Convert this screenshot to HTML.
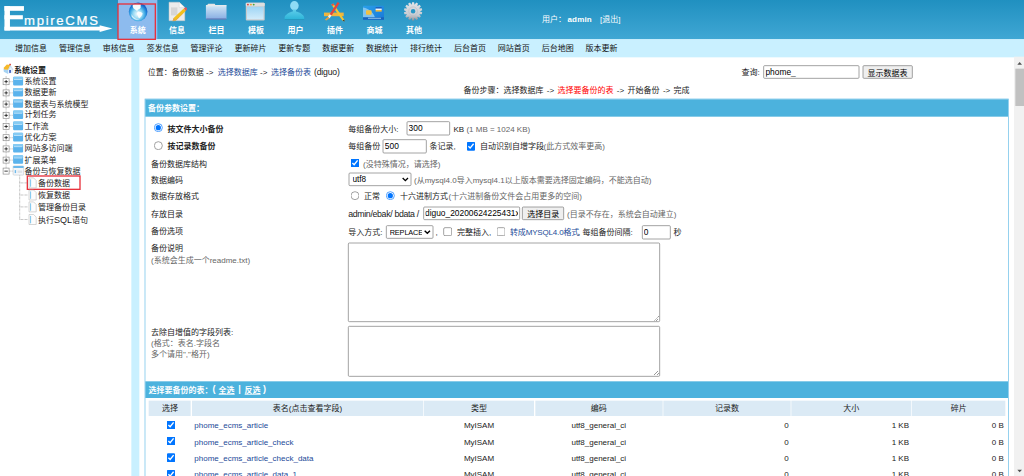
<!DOCTYPE html>
<html lang="zh-CN"><head><meta charset="utf-8"><title>EmpireCMS</title>
<style>
html,body{margin:0;padding:0;width:1024px;height:476px;overflow:hidden;background:#fff}
#s{position:absolute;left:0;top:0;width:1536px;height:714px;transform:scale(.66666667);transform-origin:0 0;font:12px "Liberation Sans","Noto Sans CJK SC",sans-serif;color:#222;overflow:hidden;background:#fff}
#s *{box-sizing:border-box}
.t{position:absolute;white-space:nowrap;line-height:16px;height:16px;font-size:12px}
.b{position:absolute}
.c{text-align:center}
.u{display:inline-block;height:15px;border-bottom:1px solid currentColor}
.w{color:#fff}
.bd{font-weight:bold}
.g{color:#666}
.a{color:#1b4a98}
.r{color:#f00}
input,select,textarea,button{position:absolute;margin:0;font:13.33px "Liberation Sans","Noto Sans CJK SC",sans-serif;color:#000}
input[type=text]{border:1px solid #767676;border-radius:2px;padding:1px 2px;background:#fff;font-size:12.6px}
textarea{border:1px solid #767676;border-radius:2px;padding:2px;background:#fff;resize:both}
button{white-space:nowrap;padding:0;font-size:12px;border:1px solid #767676;border-radius:2px;background:#efefef}
select{font-size:12.3px;padding:0 0 0 1px;border:1px solid #767676;border-radius:2px;background-color:#fff}
</style></head>
<body><div id="s">
<div class="b " style="left:0px;top:0px;width:1536px;height:58.99px;background:linear-gradient(#2090c0,#40a7d4)"></div>
<div class="b " style="left:177.15px;top:0px;width:58.65px;height:58.99px;background:#8dbbee"></div>
<div class="b " style="left:0px;top:58.99px;width:1536px;height:27px;background:#c9f0ff"></div>
<svg class="b" style="left:0;top:0" width="180" height="58" viewBox="0 0 120 38.667"><g fill="#fff"><rect x="4.45" y="6.1" width="5.5" height="24.4"/><rect x="4.45" y="6.1" width="19.5" height="4.7"/><rect x="4.45" y="15.2" width="18.4" height="4.1"/><rect x="4.45" y="26.7" width="96.5" height="3.8"/><path d="M99.6 25.2 L112.5 28.5 L99.6 31.9 Z"/></g></svg>
<div class="t w" style="left:36px;top:18.55px;font-size:19.7px;letter-spacing:2.55px;-webkit-text-stroke:.35px #fff;line-height:24px;height:24px">mpireCMS</div>
<div class="t c w bd" style="left:176.7px;width:60px;top:38px;">系统</div>
<div class="t c w bd" style="left:235.5px;width:60px;top:38px;">信息</div>
<div class="t c w bd" style="left:294.75px;width:60px;top:38px;">栏目</div>
<div class="t c w bd" style="left:354px;width:60px;top:38px;">模板</div>
<div class="t c w bd" style="left:413.25px;width:60px;top:38px;">用户</div>
<div class="t c w bd" style="left:472.5px;width:60px;top:38px;">插件</div>
<div class="t c w bd" style="left:531.75px;width:60px;top:38px;">商城</div>
<div class="t c w bd" style="left:591px;width:60px;top:38px;">其他</div>
<div class="t w" style="left:813px;top:21.2px;">用户：</div>
<div class="t w bd" style="left:851.25px;top:21.2px;letter-spacing:.25px">admin</div>
<div class="t w" style="left:900px;top:21.2px;">[退出]</div>
<div class="t c " style="left:13.5px;width:66px;top:64.33px;color:#111">增加信息</div>
<div class="t c " style="left:79.34px;width:66px;top:64.33px;color:#111">管理信息</div>
<div class="t c " style="left:145.17px;width:66px;top:64.33px;color:#111">审核信息</div>
<div class="t c " style="left:211.01px;width:66px;top:64.33px;color:#111">签发信息</div>
<div class="t c " style="left:276.84px;width:66px;top:64.33px;color:#111">管理评论</div>
<div class="t c " style="left:342.67px;width:66px;top:64.33px;color:#111">更新碎片</div>
<div class="t c " style="left:408.51px;width:66px;top:64.33px;color:#111">更新专题</div>
<div class="t c " style="left:474.35px;width:66px;top:64.33px;color:#111">数据更新</div>
<div class="t c " style="left:540.18px;width:66px;top:64.33px;color:#111">数据统计</div>
<div class="t c " style="left:606.01px;width:66px;top:64.33px;color:#111">排行统计</div>
<div class="t c " style="left:671.85px;width:66px;top:64.33px;color:#111">后台首页</div>
<div class="t c " style="left:737.68px;width:66px;top:64.33px;color:#111">网站首页</div>
<div class="t c " style="left:803.52px;width:66px;top:64.33px;color:#111">后台地图</div>
<div class="t c " style="left:869.36px;width:66px;top:64.33px;color:#111">版本更新</div>
<div class="b " style="left:197.1px;top:85.35px;width:12.3px;height:628.65px;background:#c9f0ff"></div>
<div class="t bd" style="left:20.85px;top:97.18px;">系统设置</div>
<div class="t " style="left:36.6px;top:113.98px;">系统设置</div>
<div class="t " style="left:36.6px;top:130.78px;">数据更新</div>
<div class="t " style="left:36.6px;top:147.57px;">数据表与系统模型</div>
<div class="t " style="left:36.6px;top:164.38px;">计划任务</div>
<div class="t " style="left:36.6px;top:181.18px;">工作流</div>
<div class="t " style="left:36.6px;top:197.97px;">优化方案</div>
<div class="t " style="left:36.6px;top:214.78px;">网站多访问端</div>
<div class="t " style="left:36.6px;top:231.57px;">扩展菜单</div>
<div class="t " style="left:36.6px;top:249.43px;">备份与恢复数据</div>
<div class="t " style="left:57.15px;top:267.05px;">备份数据</div>
<div class="t " style="left:57.15px;top:285.2px;">恢复数据</div>
<div class="t " style="left:57.15px;top:303.05px;">管理备份目录</div>
<div class="t " style="left:57.15px;top:321.95px;">执行<span style="font-size:13.5px">SQL</span>语句</div>
<div class="b " style="left:40.35px;top:262.95px;width:80.85px;height:22.35px;border:2.4px solid #e8323c"></div>
<div class="t " style="left:221.55px;top:101.15px;">位置：</div>
<div class="t " style="left:257.62px;top:101.15px;">备份数据 -&gt;</div>
<div class="t a" style="left:326.55px;top:101.15px;">选择数据库</div>
<div class="t " style="left:390px;top:101.15px;">-&gt;</div>
<div class="t a" style="left:406.5px;top:101.15px;">选择备份表</div>
<div class="t " style="left:471px;top:101.15px;font-size:13px;letter-spacing:-.3px">(diguo)</div>
<div class="t " style="left:1112.25px;top:101.15px;">查询:</div>
<input type="text" value="phome_" style="left:1145.1px;top:98.1px;width:143.85px;height:20.4px">
<button style="left:1293.6px;top:98.1px;width:75.45px;height:20.4px">显示数据表</button>
<div class="t c " style="left:614.75px;width:500px;top:128.15px;word-spacing:1.7px">备份步骤：选择数据库 -&gt; <span class="r">选择要备份的表</span> -&gt; 开始备份 -&gt; 完成</div>
<div class="b " style="left:217.35px;top:148.2px;width:1295.7px;height:565.8px;background:#62bbe6"></div>
<div class="b " style="left:218.4px;top:149.1px;width:1293.6px;height:564.9px;background:#fff"></div>
<div class="b " style="left:218.4px;top:149.1px;width:1293.6px;height:25.95px;background:#4cb2dd"></div>
<div class="t w bd" style="left:221.85px;top:155.15px;">备份参数设置：</div>
<input type="radio" checked style="left:231.25px;top:185.2px;width:13px;height:13px">
<div class="t bd" style="left:251.25px;top:185.9px;">按文件大小备份</div>
<div class="t " style="left:522.3px;top:185.9px;">每组备份大小:</div>
<input type="text" value="300" style="left:609.9px;top:182.4px;width:65.55px;height:21px;">
<div class="t " style="left:680.25px;top:185.9px;">KB <span class="g">(1 MB = 1024 KB)</span></div>
<input type="radio" style="left:231.25px;top:212.2px;width:13px;height:13px">
<div class="t bd" style="left:251.25px;top:212.3px;">按记录数备份</div>
<div class="t " style="left:522.3px;top:212.3px;">每组备份</div>
<input type="text" value="500" style="left:574.2px;top:208.8px;width:65.7px;height:21px;">
<div class="t " style="left:644.25px;top:212.3px;">条记录,</div>
<input type="checkbox" checked style="left:699.7px;top:212.5px;width:13px;height:13px">
<div class="t " style="left:720px;top:212.3px;">自动识别自增字段</div>
<div class="t g" style="left:815.25px;top:212.3px;">(此方式效率更高)</div>
<div class="t " style="left:226.5px;top:237.95px;">备份数据库结构</div>
<input type="checkbox" checked style="left:526.3px;top:237.85px;width:13px;height:13px">
<div class="t g" style="left:544.5px;top:237.95px;">(没特殊情况，请选择)</div>
<div class="t " style="left:226.5px;top:262.1px;">数据编码</div>
<select style="left:522.6px;top:259.05px;width:94.28px;height:19.8px;"><option>utf8</option></select>
<div class="t g" style="left:621px;top:262.1px;">(从mysql4.0导入mysql4.1以上版本需要选择固定编码，不能选自动)</div>
<div class="t " style="left:226.5px;top:287.15px;">数据存放格式</div>
<input type="radio" style="left:526.3px;top:287.35px;width:13px;height:13px">
<div class="t " style="left:546px;top:287.15px;">正常</div>
<input type="radio" checked style="left:578.95px;top:287.35px;width:13px;height:13px">
<div class="t " style="left:600px;top:287.15px;">十六进制方式</div>
<div class="t g" style="left:672.75px;top:287.15px;">(十六进制备份文件会占用更多的空间)</div>
<div class="t " style="left:226.5px;top:313.1px;">存放目录</div>
<div class="t " style="left:522.3px;top:313.1px;font-size:13.2px;letter-spacing:-.52px">admin/ebak/ bdata /</div>
<input type="text" value="diguo_20200624225431xz" style="left:634.95px;top:309.9px;width:145.05px;height:20.55px;">
<button style="left:783px;top:309.9px;width:63.45px;height:20.55px">选择目录</button>
<div class="t g" style="left:850.5px;top:313.1px;">(目录不存在，系统会自动建立)</div>
<div class="t " style="left:226.5px;top:338.6px;">备份选项</div>
<div class="t " style="left:522.3px;top:340.7px;">导入方式:</div>
<select style="left:578.55px;top:338.4px;width:71.25px;height:19.5px;font-size:11px;letter-spacing:-.2px"><option>REPLACE</option></select>
<div class="t " style="left:653.25px;top:340.7px;">,</div>
<input type="checkbox" style="left:665.2px;top:340.9px;width:13px;height:13px">
<div class="t " style="left:685.5px;top:340.7px;">完整插入,</div>
<input type="checkbox" style="left:745px;top:340.9px;width:13px;height:13px">
<div class="t a" style="left:765px;top:340.7px;letter-spacing:-.25px">转成MYSQL4.0格式</div>
<div class="t " style="left:867px;top:340.7px;">, 每组备份间隔:</div>
<input type="text" value="0" style="left:962.55px;top:337.8px;width:43.2px;height:21px;">
<div class="t " style="left:1010.25px;top:340.7px;">秒</div>
<div class="t " style="left:226.5px;top:364.25px;">备份说明</div>
<div class="t g" style="left:226.5px;top:382.4px;">(系统会生成一个readme.txt)</div>
<textarea style="left:522.3px;top:363.6px;width:467.7px;height:119.25px"></textarea>
<div class="t " style="left:226.5px;top:489.5px;">去除自增值的字段列表:</div>
<div class="t g" style="left:226.5px;top:506.6px;">(格式：表名.字段名</div>
<div class="t g" style="left:226.5px;top:523.4px;">多个请用&quot;,&quot;格开)</div>
<textarea style="left:522.3px;top:489.3px;width:467.7px;height:75.6px"></textarea>
<div class="b " style="left:218.4px;top:571.5px;width:1293.6px;height:25.8px;background:#4cb2dd"></div>
<div class="t w bd" style="left:222.6px;top:577.1px;">选择要备份的表：</div>
<div class="t w bd" style="left:318.6px;top:576.35px;font-size:13.5px">(</div>
<div class="t w bd" style="left:327.9px;top:577.1px;"><span class="u">全选</span></div>
<div class="t w bd" style="left:357.45px;top:576.35px;font-size:13.5px">|</div>
<div class="t w bd" style="left:366.6px;top:577.1px;"><span class="u">反选</span></div>
<div class="t w bd" style="left:394.5px;top:576.35px;font-size:13.5px">)</div>
<div class="b " style="left:223.2px;top:600.9px;width:63.3px;height:23.1px;background:#dbeaf5"></div>
<div class="t c " style="left:154.85px;width:200px;top:605px;">选择</div>
<div class="b " style="left:288px;top:600.9px;width:346.5px;height:23.1px;background:#dbeaf5"></div>
<div class="t c " style="left:361.25px;width:200px;top:605px;">表名(点击查看字段)</div>
<div class="b " style="left:635.55px;top:600.9px;width:165.9px;height:23.1px;background:#dbeaf5"></div>
<div class="t c " style="left:618.5px;width:200px;top:605px;">类型</div>
<div class="b " style="left:802.5px;top:600.9px;width:191.4px;height:23.1px;background:#dbeaf5"></div>
<div class="t c " style="left:798.2px;width:200px;top:605px;">编码</div>
<div class="b " style="left:994.8px;top:600.9px;width:191.1px;height:23.1px;background:#dbeaf5"></div>
<div class="t c " style="left:990.35px;width:200px;top:605px;">记录数</div>
<div class="b " style="left:1186.95px;top:600.9px;width:179.85px;height:23.1px;background:#dbeaf5"></div>
<div class="t c " style="left:1176.88px;width:200px;top:605px;">大小</div>
<div class="b " style="left:1368px;top:600.9px;width:139.95px;height:23.1px;background:#dbeaf5"></div>
<div class="t c " style="left:1337.97px;width:200px;top:605px;">碎片</div>
<input type="checkbox" checked style="left:250px;top:630.55px;width:13px;height:13px">
<div class="t a" style="left:291.45px;top:630.2px;">phome_ecms_article</div>
<div class="t c " style="left:618.5px;width:200px;top:630.2px;">MyISAM</div>
<div class="t c " style="left:798.2px;width:200px;top:630.2px;">utf8_general_ci</div>
<div class="t " style="right:352.8px;top:630.2px;">0</div>
<div class="t " style="right:172.5px;top:630.2px;">1 KB</div>
<div class="t " style="right:30.3px;top:630.2px;">0 B</div>
<input type="checkbox" checked style="left:250px;top:655.22px;width:13px;height:13px">
<div class="t a" style="left:291.45px;top:654.88px;">phome_ecms_article_check</div>
<div class="t c " style="left:618.5px;width:200px;top:654.88px;">MyISAM</div>
<div class="t c " style="left:798.2px;width:200px;top:654.88px;">utf8_general_ci</div>
<div class="t " style="right:352.8px;top:654.88px;">0</div>
<div class="t " style="right:172.5px;top:654.88px;">1 KB</div>
<div class="t " style="right:30.3px;top:654.88px;">0 B</div>
<input type="checkbox" checked style="left:250px;top:679.9px;width:13px;height:13px">
<div class="t a" style="left:291.45px;top:679.55px;">phome_ecms_article_check_data</div>
<div class="t c " style="left:618.5px;width:200px;top:679.55px;">MyISAM</div>
<div class="t c " style="left:798.2px;width:200px;top:679.55px;">utf8_general_ci</div>
<div class="t " style="right:352.8px;top:679.55px;">0</div>
<div class="t " style="right:172.5px;top:679.55px;">1 KB</div>
<div class="t " style="right:30.3px;top:679.55px;">0 B</div>
<input type="checkbox" checked style="left:250px;top:704.58px;width:13px;height:13px">
<div class="t a" style="left:291.45px;top:704.23px;">phome_ecms_article_data_1</div>
<div class="t c " style="left:618.5px;width:200px;top:704.23px;">MyISAM</div>
<div class="t c " style="left:798.2px;width:200px;top:704.23px;">utf8_general_ci</div>
<div class="t " style="right:352.8px;top:704.23px;">0</div>
<div class="t " style="right:172.5px;top:704.23px;">1 KB</div>
<div class="t " style="right:30.3px;top:704.23px;">0 B</div>
<svg class="b" style="left:0;top:0" width="1536" height="58" viewBox="0 0 1024 38.667"><defs><radialGradient id="gg" cx="0.47" cy="0.62" r="0.56"><stop offset="0" stop-color="#f2fbfe"/><stop offset="0.45" stop-color="#8fd6f2"/><stop offset="0.72" stop-color="#3aa4e2"/><stop offset="0.9" stop-color="#1c78d4"/><stop offset="1" stop-color="#1560c4"/></radialGradient><linearGradient id="fo" x1="0" y1="0" x2="0" y2="1"><stop offset="0" stop-color="#d3e8f6"/><stop offset="1" stop-color="#86ade3"/></linearGradient><linearGradient id="wi" x1="0" y1="0" x2="0" y2="1"><stop offset="0" stop-color="#9fd5f5"/><stop offset="1" stop-color="#d2ecfb"/></linearGradient><linearGradient id="us" x1="0" y1="0" x2="0" y2="1"><stop offset="0" stop-color="#5fcdea"/><stop offset="1" stop-color="#2ab3d8"/></linearGradient><linearGradient id="ge" x1="0" y1="0" x2="0" y2="1"><stop offset="0" stop-color="#e2e4e8"/><stop offset="0.7" stop-color="#c9ccd2"/><stop offset="1" stop-color="#8f9197"/></linearGradient><linearGradient id="cd" x1="0" y1="0" x2="1" y2="1"><stop offset="0" stop-color="#2aa0ea"/><stop offset="1" stop-color="#1878d8"/></linearGradient></defs><circle cx="138.1" cy="11.85" r="9.35" fill="url(#gg)"/><path d="M133 4.6 C135 3.6 139 3.4 141 4.4 C140 6 141.5 7.2 140 8.6 C139 9.8 137.2 9.2 137.4 11 C136 10.6 134.6 9 133.6 8.4 C132.6 7.2 132.4 5.6 133 4.6Z" fill="#fff" opacity=".95"/><path d="M137.6 11.6 C139.4 11 141.6 12 142.6 13.6 C142.2 15.6 140.6 17.4 139 18.6 C138.2 17 137.4 15 137 13.4Z" fill="#fff" opacity=".9"/><path d="M131.5 14 C133 17 136 19.6 139.6 19.4 C137 20.6 133.6 19.4 131.6 16.4Z" fill="#eaf8fd" opacity=".8"/><path d="M169 2.2 H179.2 L184.8 7.6 V20.7 H169Z" fill="#ececec" stroke="#c9c9c9" stroke-width=".5"/><path d="M179.2 2.2 V7.6 H184.8Z" fill="#fbfbfb" stroke="#cfcfcf" stroke-width=".4"/><rect x="171" y="7.4" width="6.4" height="8" fill="#d6d6d6"/><path d="M172.6 21.3 L173.6 18 L183.8 8.6 L186 10.8 L175.8 20.4Z" fill="#f3c01c"/><path d="M174.9 20.9 L185.2 11.4 L186 10.8 L175.8 20.4Z" fill="#cf5a1c"/><path d="M183.8 8.6 L185.2 7.4 C186 6.8 187.6 8.4 187 9.4 L186 10.8Z" fill="#e0595f"/><path d="M172.6 21.3 L173.6 18 L175.8 20.4Z" fill="#d9a45a"/><path d="M207.6 5.4 V4.4 Q207.6 3.7 208.4 3.7 H214.4 Q215.1 3.7 215.1 4.4 V5.4Z" fill="#e4e4e4"/><rect x="205.9" y="5.1" width="20.6" height="14.2" rx=".8" fill="url(#fo)"/><rect x="205.9" y="5.1" width="20.6" height="1.1" rx=".5" fill="#e6e9ec"/><rect x="206.2" y="18.5" width="20" height="1" fill="#5d6fae"/><rect x="245.8" y="2.8" width="18.9" height="17.8" rx="1" fill="#c9cbcd"/><rect x="245.8" y="2.8" width="18.9" height="3.4" rx="1" fill="#dedede"/><rect x="247" y="6.7" width="16.5" height="12.6" fill="url(#wi)"/><circle cx="247.9" cy="4.6" r=".95" fill="#e2413c"/><circle cx="250.9" cy="4.6" r=".95" fill="#eba32c"/><circle cx="253.7" cy="4.6" r=".95" fill="#3fa83a"/><ellipse cx="294.4" cy="5.7" rx="4.3" ry="4.6" fill="#8fdcf5"/><path d="M292.8 9.4 H296 V11.6 C299 12.2 303.6 14.6 304.2 17.4 V19.8 H284.6 V17.4 C285.2 14.6 289.8 12.2 292.8 11.6Z" fill="url(#us)"/><rect x="284.6" y="19.3" width="19.6" height=".7" fill="#2390b8"/><rect x="324" y="12.6" width="19.7" height="3.6" fill="#f0b53e"/><path d="M331.3 4.6 L333.3 3.4 L344.2 19.6 L344.4 21.4 L342.6 20.8Z" fill="#f5c632"/><path d="M331.3 4.6 L333.3 3.4 L334.2 4.8 L332.2 6Z" fill="#e2504a"/><path d="M342.6 20.8 L344.2 19.6 L344.6 21.6Z" fill="#3a3028"/><path d="M337.6 2 L339.6 3.2 L331.6 15.4 L329.6 14.2Z" fill="#e2463e"/><path d="M329.6 14.2 L331.6 15.4 L329.6 18.2 L327.8 17Z" fill="#efefef"/><path d="M327.8 17 L329.6 18.2 L326.4 20.6 L324.8 19.8Z" fill="#e8a040"/><rect x="363" y="5.8" width="21" height="13.9" rx="1" fill="url(#cd)"/><path d="M363 7.4 C369 8.4 373 12 375 17.4 H363Z" fill="#8fcdf3" opacity=".85"/><rect x="363" y="17.3" width="21" height="2.4" fill="#1763bd"/><rect x="368" y="17.8" width="13" height=".9" fill="#9fd0f0"/><rect x="366" y="10.3" width="5.6" height="4.5" rx=".8" fill="#f2c040"/><rect x="375.6" y="7.3" width="6.1" height="1.3" fill="#1a4fb0"/><rect x="375.6" y="8.6" width="6.1" height="1.4" fill="#f4f4f4"/><rect x="375.6" y="10" width="6.1" height="1.6" fill="#f0b93a"/><path fill-rule="evenodd" d="M412.09 2.16 L414.11 2.16 L414.49 4.44 L414.82 4.52 L416.16 2.62 L417.98 3.50 L417.33 5.72 L417.60 5.94 L419.62 4.81 L420.88 6.39 L419.33 8.11 L419.48 8.42 L421.79 8.28 L422.24 10.25 L420.10 11.13 L420.10 11.47 L422.24 12.35 L421.79 14.32 L419.48 14.18 L419.33 14.49 L420.88 16.21 L419.62 17.79 L417.60 16.66 L417.33 16.88 L417.98 19.10 L416.16 19.98 L414.82 18.08 L414.49 18.16 L414.11 20.44 L412.09 20.44 L411.71 18.16 L411.38 18.08 L410.04 19.98 L408.22 19.10 L408.87 16.88 L408.60 16.66 L406.58 17.79 L405.32 16.21 L406.87 14.49 L406.72 14.18 L404.41 14.32 L403.96 12.35 L406.10 11.47 L406.10 11.13 L403.96 10.25 L404.41 8.28 L406.72 8.42 L406.87 8.11 L405.32 6.39 L406.58 4.81 L408.60 5.94 L408.87 5.72 L408.22 3.50 L410.04 2.62 L411.38 4.52 L411.71 4.44Z M410.80 11.30 a2.3 2.3 0 1 0 4.6 0 a2.3 2.3 0 1 0 -4.6 0Z" fill="url(#ge)"/><circle cx="413.10" cy="11.30" r="4.4" fill="none" stroke="#b9bcc2" stroke-width=".6"/></svg>
<div class="b " style="left:176.25px;top:4.5px;width:57.6px;height:55.35px;border:2.4px solid #e8323c"></div>
<svg class="b" style="left:0;top:90px" width="197" height="270" viewBox="0 60 131.333 180"><path d="M3.5 69 L8.1 69.4 L8.1 73.9 L3.8 71.8Z" fill="#a6d2f2"/><path d="M8.1 69.4 L10.9 66.2 L13.1 69.8 L12.9 72.6 L8.1 73.9Z" fill="#e4f1fb"/><rect x="9.2" y="63.8" width="1.8" height="2" fill="#e0504a"/><path d="M3.5 68 L6.8 64.6 L10.5 65.1 L8.3 69.7 L4.4 69.6Z" fill="#f6b829"/><path d="M10.5 65.1 L13.4 69.7 L12.7 70.3 L10.9 67.1 L8.7 69.9 L8.1 69.5Z" fill="#c4dcf3"/><rect x="9.2" y="70" width="1.7" height="2.9" fill="#3d5fc0"/><path d="M6.1 76 V171" stroke="#808080" stroke-width=".67" stroke-dasharray=".67 .67" fill="none"/><path d="M9.2 81.70 H13" stroke="#808080" stroke-width=".67" stroke-dasharray=".67 .67" fill="none"/><rect x="3.10" y="78.70" width="6.00" height="6.00" fill="#fff" stroke="#8c8c8c" stroke-width=".67"/><rect x="4.40" y="81.30" width="3.4" height=".8" fill="#111"/><rect x="5.70" y="80.00" width=".8" height="3.4" fill="#111"/><rect x="13.10" y="76.80" width="10" height="8.6" rx="1" fill="#5bb3ec"/><rect x="13.10" y="76.80" width="10" height="2.6" rx="1" fill="#86cbf3"/><rect x="13.90" y="79.30" width="8.4" height=".6" fill="#e8f6fd"/><path d="M9.2 92.90 H13" stroke="#808080" stroke-width=".67" stroke-dasharray=".67 .67" fill="none"/><rect x="3.10" y="89.90" width="6.00" height="6.00" fill="#fff" stroke="#8c8c8c" stroke-width=".67"/><rect x="4.40" y="92.50" width="3.4" height=".8" fill="#111"/><rect x="5.70" y="91.20" width=".8" height="3.4" fill="#111"/><rect x="13.10" y="88.00" width="10" height="8.6" rx="1" fill="#5bb3ec"/><rect x="13.10" y="88.00" width="10" height="2.6" rx="1" fill="#86cbf3"/><rect x="13.90" y="90.50" width="8.4" height=".6" fill="#e8f6fd"/><path d="M9.2 104.10 H13" stroke="#808080" stroke-width=".67" stroke-dasharray=".67 .67" fill="none"/><rect x="3.10" y="101.10" width="6.00" height="6.00" fill="#fff" stroke="#8c8c8c" stroke-width=".67"/><rect x="4.40" y="103.70" width="3.4" height=".8" fill="#111"/><rect x="5.70" y="102.40" width=".8" height="3.4" fill="#111"/><rect x="13.10" y="99.20" width="10" height="8.6" rx="1" fill="#5bb3ec"/><rect x="13.10" y="99.20" width="10" height="2.6" rx="1" fill="#86cbf3"/><rect x="13.90" y="101.70" width="8.4" height=".6" fill="#e8f6fd"/><path d="M9.2 115.30 H13" stroke="#808080" stroke-width=".67" stroke-dasharray=".67 .67" fill="none"/><rect x="3.10" y="112.30" width="6.00" height="6.00" fill="#fff" stroke="#8c8c8c" stroke-width=".67"/><rect x="4.40" y="114.90" width="3.4" height=".8" fill="#111"/><rect x="5.70" y="113.60" width=".8" height="3.4" fill="#111"/><rect x="13.10" y="110.40" width="10" height="8.6" rx="1" fill="#5bb3ec"/><rect x="13.10" y="110.40" width="10" height="2.6" rx="1" fill="#86cbf3"/><rect x="13.90" y="112.90" width="8.4" height=".6" fill="#e8f6fd"/><path d="M9.2 126.50 H13" stroke="#808080" stroke-width=".67" stroke-dasharray=".67 .67" fill="none"/><rect x="3.10" y="123.50" width="6.00" height="6.00" fill="#fff" stroke="#8c8c8c" stroke-width=".67"/><rect x="4.40" y="126.10" width="3.4" height=".8" fill="#111"/><rect x="5.70" y="124.80" width=".8" height="3.4" fill="#111"/><rect x="13.10" y="121.60" width="10" height="8.6" rx="1" fill="#5bb3ec"/><rect x="13.10" y="121.60" width="10" height="2.6" rx="1" fill="#86cbf3"/><rect x="13.90" y="124.10" width="8.4" height=".6" fill="#e8f6fd"/><path d="M9.2 137.70 H13" stroke="#808080" stroke-width=".67" stroke-dasharray=".67 .67" fill="none"/><rect x="3.10" y="134.70" width="6.00" height="6.00" fill="#fff" stroke="#8c8c8c" stroke-width=".67"/><rect x="4.40" y="137.30" width="3.4" height=".8" fill="#111"/><rect x="5.70" y="136.00" width=".8" height="3.4" fill="#111"/><rect x="13.10" y="132.80" width="10" height="8.6" rx="1" fill="#5bb3ec"/><rect x="13.10" y="132.80" width="10" height="2.6" rx="1" fill="#86cbf3"/><rect x="13.90" y="135.30" width="8.4" height=".6" fill="#e8f6fd"/><path d="M9.2 148.90 H13" stroke="#808080" stroke-width=".67" stroke-dasharray=".67 .67" fill="none"/><rect x="3.10" y="145.90" width="6.00" height="6.00" fill="#fff" stroke="#8c8c8c" stroke-width=".67"/><rect x="4.40" y="148.50" width="3.4" height=".8" fill="#111"/><rect x="5.70" y="147.20" width=".8" height="3.4" fill="#111"/><rect x="13.10" y="144.00" width="10" height="8.6" rx="1" fill="#5bb3ec"/><rect x="13.10" y="144.00" width="10" height="2.6" rx="1" fill="#86cbf3"/><rect x="13.90" y="146.50" width="8.4" height=".6" fill="#e8f6fd"/><path d="M9.2 160.10 H13" stroke="#808080" stroke-width=".67" stroke-dasharray=".67 .67" fill="none"/><rect x="3.10" y="157.10" width="6.00" height="6.00" fill="#fff" stroke="#8c8c8c" stroke-width=".67"/><rect x="4.40" y="159.70" width="3.4" height=".8" fill="#111"/><rect x="5.70" y="158.40" width=".8" height="3.4" fill="#111"/><rect x="13.10" y="155.20" width="10" height="8.6" rx="1" fill="#5bb3ec"/><rect x="13.10" y="155.20" width="10" height="2.6" rx="1" fill="#86cbf3"/><rect x="13.90" y="157.70" width="8.4" height=".6" fill="#e8f6fd"/><path d="M9.2 171.10 H13" stroke="#808080" stroke-width=".67" stroke-dasharray=".67 .67" fill="none"/><rect x="3.10" y="168.10" width="6.00" height="6.00" fill="#fff" stroke="#8c8c8c" stroke-width=".67"/><rect x="4.40" y="170.70" width="3.4" height=".8" fill="#111"/><rect x="13.10" y="165.90" width="10.6" height="9.2" rx=".8" fill="#f4f7fa" stroke="#b5bcc4" stroke-width=".5"/><rect x="13.10" y="165.90" width="10.6" height="2.2" rx=".8" fill="#6db9ea"/><rect x="14.70" y="170.10" width="1.4" height="3" fill="#6db9ea"/><rect x="17.50" y="170.50" width="4.6" height="2.4" fill="#dde3e8"/><path d="M19.7 175.6 V219.9" stroke="#808080" stroke-width=".67" stroke-dasharray=".67 .67" fill="none"/><path d="M19.7 182.90 H28" stroke="#808080" stroke-width=".67" stroke-dasharray=".67 .67" fill="none"/><path d="M29.00 177.90 h4.6 l2.6 2.6 v7.4 h-7.2Z" fill="#fdfdfd" stroke="#b4b4b4" stroke-width=".55"/><rect x="30.10" y="179.30" width="1" height="7.4" fill="#7cc6ee"/><path d="M19.7 195.00 H28" stroke="#808080" stroke-width=".67" stroke-dasharray=".67 .67" fill="none"/><path d="M29.00 190.00 h4.6 l2.6 2.6 v7.4 h-7.2Z" fill="#fdfdfd" stroke="#b4b4b4" stroke-width=".55"/><rect x="30.10" y="191.40" width="1" height="7.4" fill="#7cc6ee"/><path d="M19.7 206.90 H28" stroke="#808080" stroke-width=".67" stroke-dasharray=".67 .67" fill="none"/><path d="M29.00 201.90 h4.6 l2.6 2.6 v7.4 h-7.2Z" fill="#fdfdfd" stroke="#b4b4b4" stroke-width=".55"/><rect x="30.10" y="203.30" width="1" height="7.4" fill="#7cc6ee"/><path d="M19.7 219.50 H28" stroke="#808080" stroke-width=".67" stroke-dasharray=".67 .67" fill="none"/><path d="M29.00 214.50 h4.6 l2.6 2.6 v7.4 h-7.2Z" fill="#fdfdfd" stroke="#b4b4b4" stroke-width=".55"/><rect x="30.10" y="215.90" width="1" height="7.4" fill="#7cc6ee"/></svg>
<div class="b " style="left:1521.15px;top:85.35px;width:14.85px;height:628.65px;background:#f1f1f1"></div>
<div class="b " style="left:1522.95px;top:102.75px;width:13.05px;height:56.25px;background:#c1c1c1"></div>
<svg class="b" style="left:1521px;top:86.1px" width="17" height="17" viewBox="0 0 17 17"><path d="M5 11 L8.5 7 L12 11Z" fill="#505050"/></svg>
<svg class="b" style="left:1521px;top:698.4px" width="17" height="17" viewBox="0 0 17 17"><path d="M5 6.5 L8.5 10.5 L12 6.5Z" fill="#505050"/></svg>
</div></body></html>
